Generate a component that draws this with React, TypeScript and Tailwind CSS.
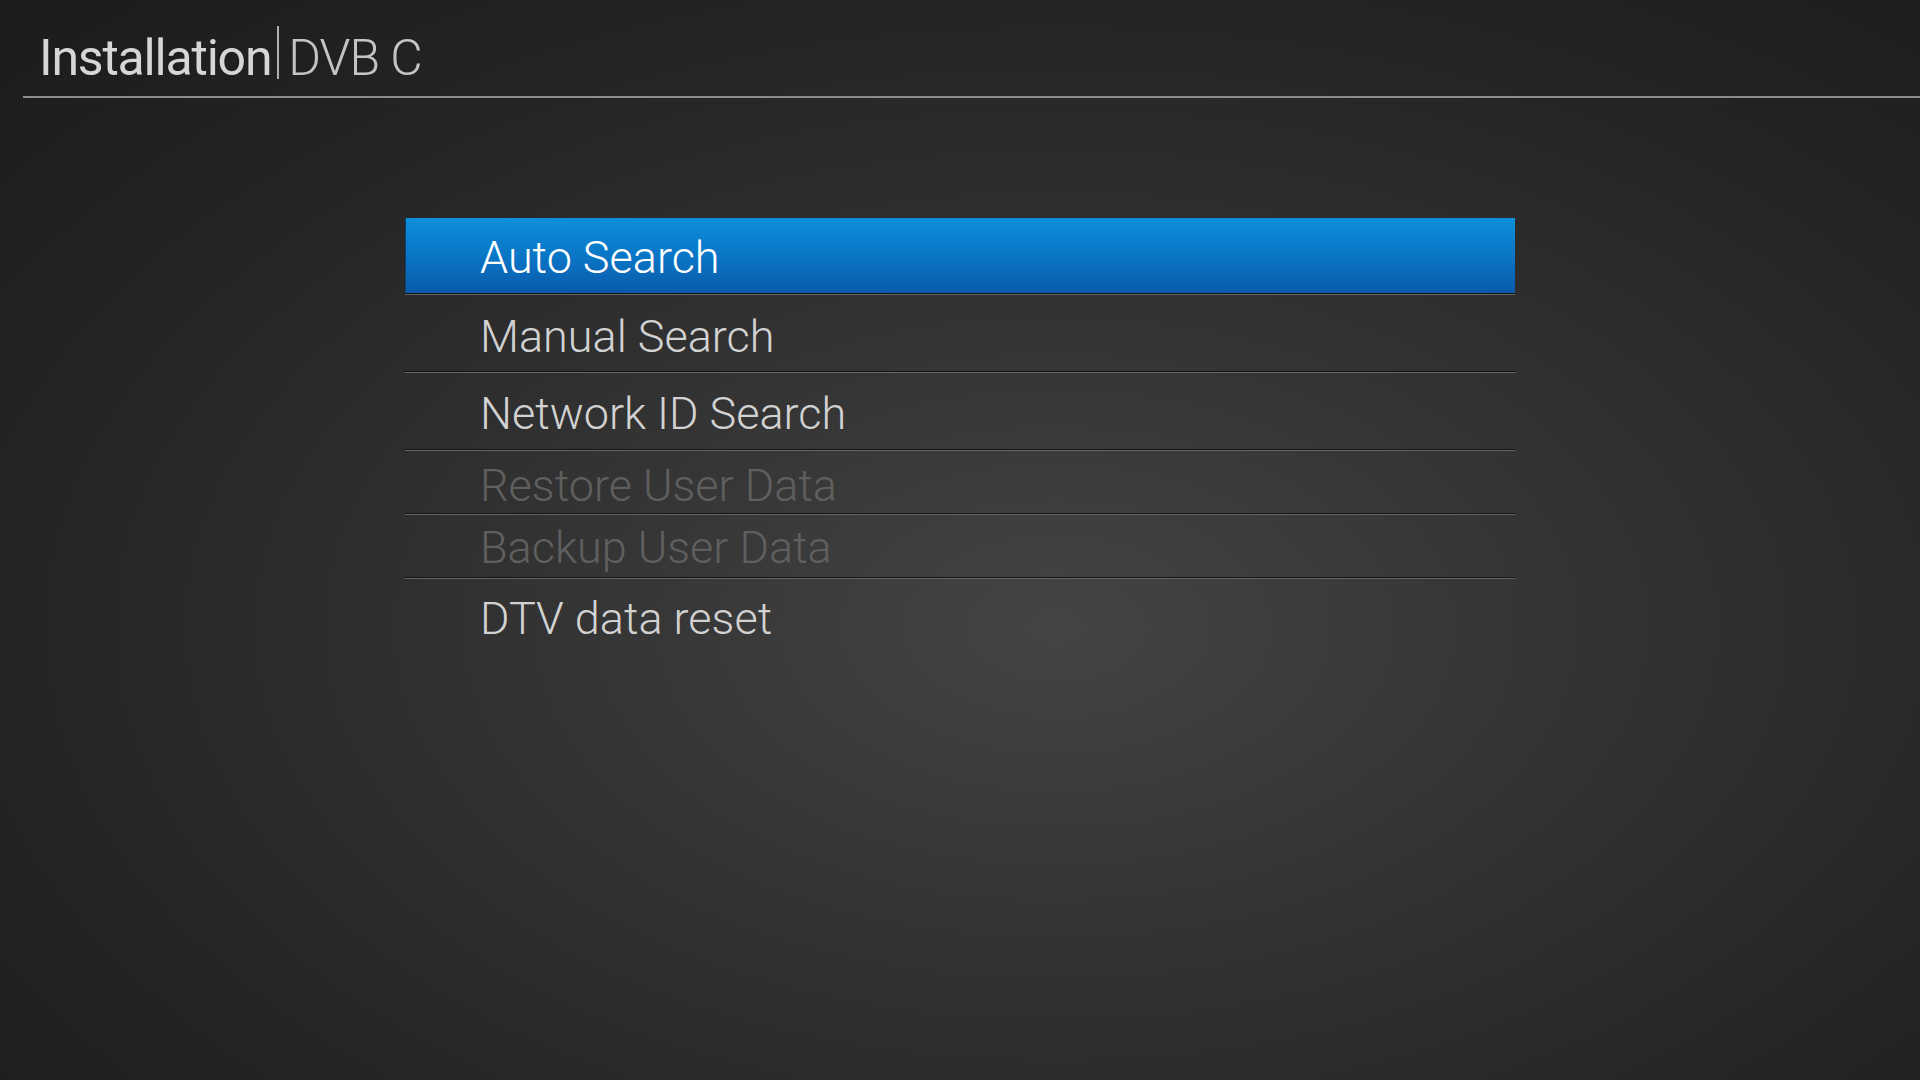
import React from "react";

type Item = { label: string; state: "active" | "normal" | "disabled"; h: string; pt: string };

const items: Item[] = [
  { label: "Auto Search", state: "active", h: "h-[75px]", pt: "pt-[17px]" },
  { label: "Manual Search", state: "normal", h: "h-[76px]", pt: "pt-[19px]" },
  { label: "Network ID Search", state: "normal", h: "h-[76px]", pt: "pt-[18px]" },
  { label: "Restore User Data", state: "disabled", h: "h-[62px]", pt: "pt-[12px]" },
  { label: "Backup User Data", state: "disabled", h: "h-[62px]", pt: "pt-[10px]" },
  { label: "DTV data reset", state: "normal", h: "h-[76px]", pt: "pt-[17px]" },
];

function Divider() {
  return (
    <div className="flex flex-col">
      <div className="h-px bg-[#141414]" />
      <div className="h-px bg-[#666666]" />
    </div>
  );
}

export default function App() {
  return (
    <div
      className="w-[1920px] h-[1080px] overflow-hidden bg-[radial-gradient(ellipse_at_55%_58%,#444444_0%,#333333_35%,#242424_70%,#1b1b1b_100%)]"
      style={{ fontFamily: "Roboto, 'Noto Sans', sans-serif" }}
    >
      <header className="pt-[26px] pl-[39px] flex items-start h-[96px]">
        <span className="text-[50px] leading-none text-[#d6d6d6] font-normal tracking-[-1.2px] mt-[7px]">
          Installation
        </span>
        <div className="w-[2px] h-[53px] bg-[#b0b0b0] ml-[6px] mr-[9px]" />
        <span className="text-[50px] leading-none text-[#c4c4c4] font-light tracking-[-1px] mt-[7px]">DVB C</span>
      </header>
      <div className="ml-[23px] h-[2px] bg-[#8c8c8c]" />

      <div className="ml-[405px] w-[1110px] mt-[120px] flex flex-col">
        {items.map((it, i) => (
          <React.Fragment key={it.label}>
            {i > 0 && <Divider />}
            <div
              className={
                it.state === "active"
                  ? `${it.h} ${it.pt} pl-[74px] bg-[linear-gradient(to_bottom,#0c8fd9,#0a73c4_55%,#0a5ba9)] border-l border-[#0a3f6e]`
                  : `${it.h} ${it.pt} pl-[75px]`
              }
            >
              <span
                className={
                  "block text-[45px] leading-none font-light " +
                  (it.state === "active"
                    ? "text-white"
                    : it.state === "normal"
                    ? "text-[#d2d2d2]"
                    : "text-[#5f5f5f]")
                }
              >
                {it.label}
              </span>
            </div>
          </React.Fragment>
        ))}
      </div>
    </div>
  );
}
